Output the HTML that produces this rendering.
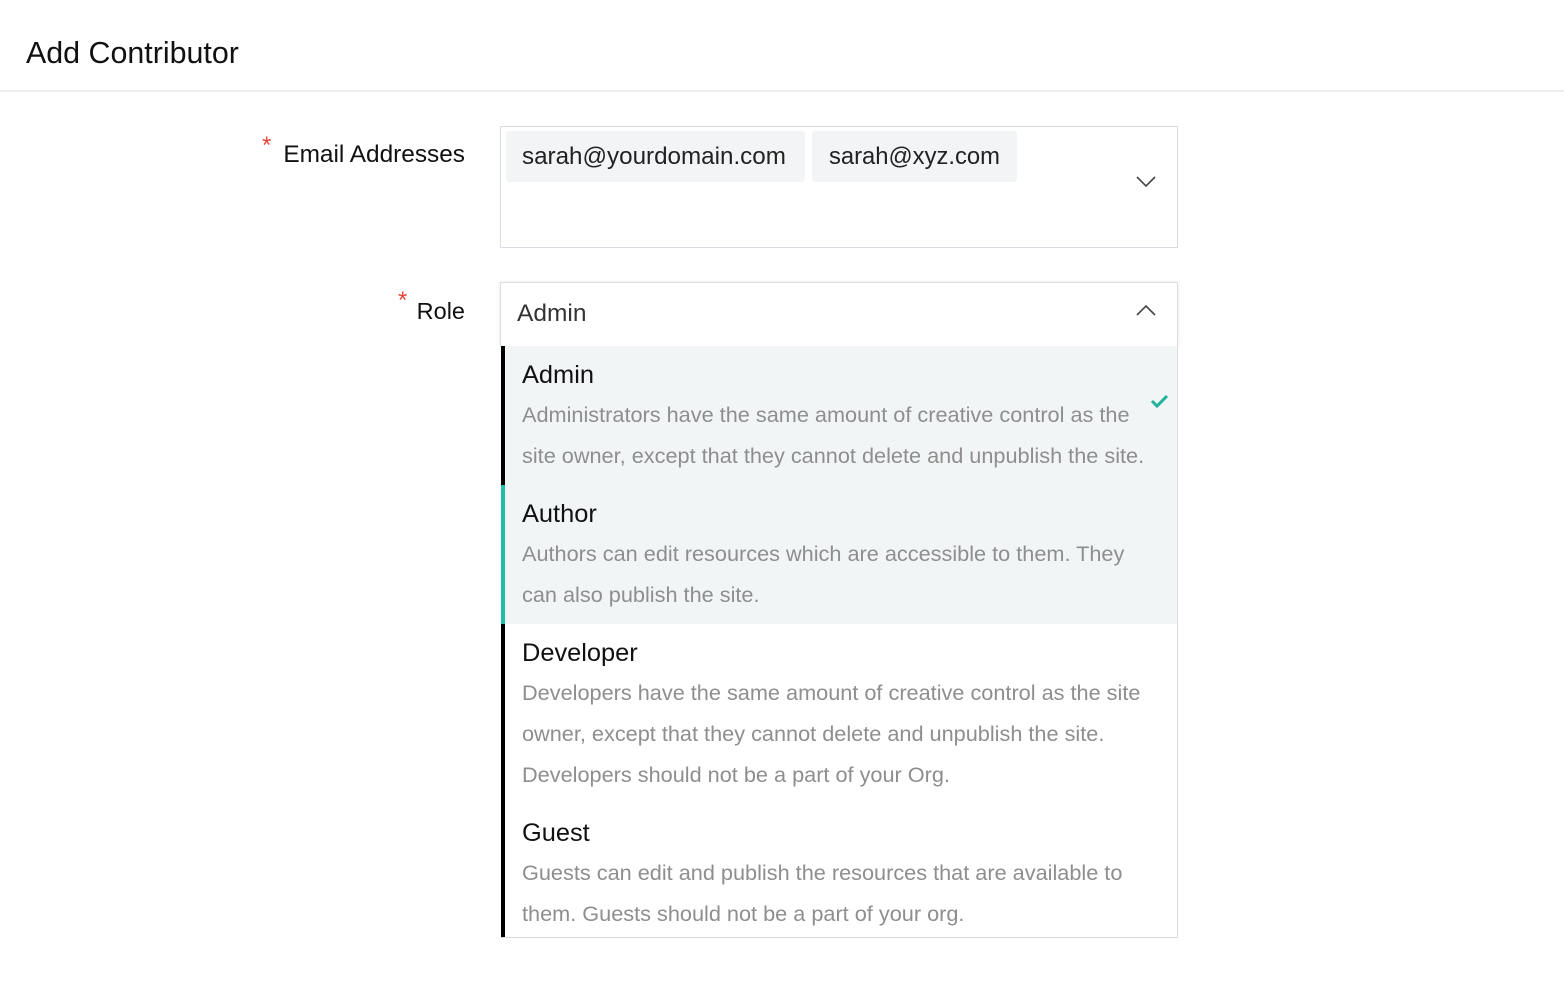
<!DOCTYPE html>
<html><head><meta charset="utf-8"><style>
*{margin:0;padding:0;box-sizing:border-box}
body{width:1564px;height:1008px;background:#fff;font-family:"Liberation Sans",sans-serif;position:relative;overflow:hidden}
.a{position:absolute;white-space:nowrap}
.t{font-size:25.4px;color:#111;line-height:30px;left:522px}
.d{font-size:21.7px;color:#8e8e8e;line-height:30px;left:522px}
</style></head><body>
<div class="a" style="left:26px;top:36px;font-size:30.4px;line-height:34px;color:#111">Add Contributor</div>
<div class="a" style="left:0;top:90px;width:1564px;height:2px;background:#eceeee"></div>

<div class="a" style="left:262px;top:134px;color:#e8473b;font-size:24px;line-height:24px">*</div>
<div class="a" style="right:1099px;top:140px;font-size:24.4px;line-height:30px;color:#111">Email Addresses</div>
<div class="a" style="left:398px;top:289px;color:#e8473b;font-size:24px;line-height:24px">*</div>
<div class="a" style="right:1099px;top:296px;font-size:23.5px;line-height:30px;color:#111">Role</div>

<div class="a" style="left:500px;top:126px;width:678px;height:122px;border:1px solid #d9dce2"></div>
<div class="a" style="left:506px;top:131px;width:299px;height:51px;background:#f2f4f5;border-radius:3px"></div>
<div class="a" style="left:522px;top:142px;font-size:24.2px;line-height:30px;color:#222">sarah@yourdomain.com</div>
<div class="a" style="left:812px;top:131px;width:205px;height:51px;background:#f2f4f5;border-radius:3px"></div>
<div class="a" style="left:829px;top:142px;font-size:23.8px;line-height:30px;color:#222">sarah@xyz.com</div>
<svg class="a" style="left:1134px;top:174px" width="24" height="16"><path d="M3 3 L12 12 L21 3" fill="none" stroke="#444" stroke-width="1.6"/></svg>

<div class="a" style="left:500px;top:282px;width:678px;height:65px;border:1px solid #d9dce2;border-bottom:none;box-shadow:0 0 4px rgba(0,0,0,.08)"></div>
<div class="a" style="left:517px;top:299px;font-size:24.5px;line-height:30px;color:#333">Admin</div>
<svg class="a" style="left:1134px;top:302px" width="24" height="16"><path d="M3 13 L12 4 L21 13" fill="none" stroke="#444" stroke-width="1.6"/></svg>

<div class="a" style="left:501px;top:346px;width:677px;height:592px;border-right:1px solid #dcdcdc;border-bottom:1px solid #dcdcdc;background:#fff"></div>
<div class="a" style="left:501px;top:346px;width:676px;height:278px;background:#f2f5f6"></div>
<div class="a" style="left:501px;top:346px;width:4px;height:591px;background:#000"></div>
<div class="a" style="left:501px;top:485px;width:4px;height:139px;background:#1fbfa8"></div>

<svg class="a" style="left:1148px;top:390px" width="24" height="22"><path d="M4 11 L9 16 L19 6" fill="none" stroke="#1fb39c" stroke-width="3"/></svg>

<div class="a t" style="top:360px">Admin</div>
<div class="a d" style="top:400px">Administrators have the same amount of creative control as the</div>
<div class="a d" style="top:441px">site owner, except that they cannot delete and unpublish the site.</div>

<div class="a t" style="top:499px">Author</div>
<div class="a d" style="top:539px">Authors can edit resources which are accessible to them. They</div>
<div class="a d" style="top:580px">can also publish the site.</div>

<div class="a t" style="top:638px">Developer</div>
<div class="a d" style="top:678px">Developers have the same amount of creative control as the site</div>
<div class="a d" style="top:719px">owner, except that they cannot delete and unpublish the site.</div>
<div class="a d" style="top:760px">Developers should not be a part of your Org.</div>

<div class="a t" style="top:818px">Guest</div>
<div class="a d" style="top:858px">Guests can edit and publish the resources that are available to</div>
<div class="a d" style="top:899px">them. Guests should not be a part of your org.</div>
</body></html>
